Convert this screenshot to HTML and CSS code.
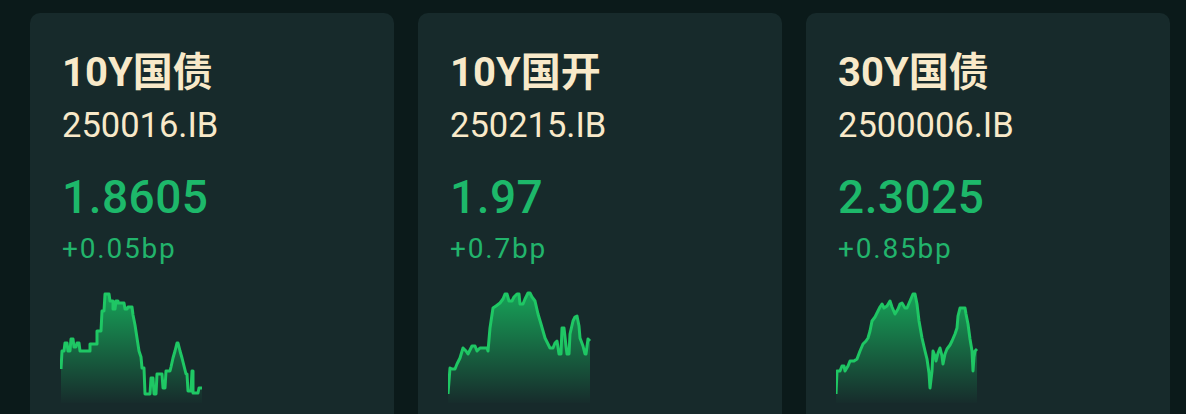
FILE: index.html
```html
<!DOCTYPE html>
<html lang="zh">
<head>
    <meta charset="UTF-8">
    <meta name="viewport" content="width=device-width, initial-scale=1.0">
    <title>债券行情</title>
    <link rel="stylesheet" href="styles.css">
</head>
<body>
    <div class="board">
        <div class="card">
            <div class="name">10Y国债</div>
            <div class="code">250016.IB</div>
            <div class="price">1.8605</div>
            <div class="change">+0.05bp</div>
            <svg class="spark" viewBox="60 288 146 114">
                <defs>
                    <linearGradient id="fill1" x1="0" y1="0" x2="0" y2="1">
                        <stop offset="0" stop-color="#17a85a" stop-opacity="0.95"/>
                        <stop offset="1" stop-color="#17a85a" stop-opacity="0"/>
                    </linearGradient>
                </defs>
                <path class="area" fill="url(#fill1)" d="M61 368 L62 350 L64 350 L65 342 L67 342 L68 350 L70 350 L71 338 L73 338 L74 346 L76 346 L77 342 L79 342 L80 350 L88 350 L90 350 L90 343 L97 343 L97 330 L101 330 L102 310 L104 310 L105 293 L109 293 L110 300 L113 300 L113 308 L115 308 L116 300 L118 300 L118 302 L124 302 L125 308 L127 308 L128 306 L132 306 L133 314 L135 324 L137 337 L139 350 L141 356 L142 367 L144 367 L145 393 L150 393 L151 377 L153 377 L154 393 L156 393 L157 373 L162 373 L163 387 L165 387 L166 370 L170 370 L171 366 L173 357 L175 350 L177 342 L178 342 L180 350 L182 357 L184 365 L186 373 L187 373 L188 390 L191 390 L192 370 L193 370 L193 392 L198 392 L199 387 L202 387 L202 404 L61 404 Z"/>
                <path class="line" d="M61 368 L62 350 L64 350 L65 342 L67 342 L68 350 L70 350 L71 338 L73 338 L74 346 L76 346 L77 342 L79 342 L80 350 L88 350 L90 350 L90 343 L97 343 L97 330 L101 330 L102 310 L104 310 L105 293 L109 293 L110 300 L113 300 L113 308 L115 308 L116 300 L118 300 L118 302 L124 302 L125 308 L127 308 L128 306 L132 306 L133 314 L135 324 L137 337 L139 350 L141 356 L142 367 L144 367 L145 393 L150 393 L151 377 L153 377 L154 393 L156 393 L157 373 L162 373 L163 387 L165 387 L166 370 L170 370 L171 366 L173 357 L175 350 L177 342 L178 342 L180 350 L182 357 L184 365 L186 373 L187 373 L188 390 L191 390 L192 370 L193 370 L193 392 L198 392 L199 387 L202 387"/>
            </svg>
        </div>
        <div class="card">
            <div class="name">10Y国开</div>
            <div class="code">250215.IB</div>
            <div class="price">1.97</div>
            <div class="change">+0.7bp</div>
            <svg class="spark" viewBox="448 288 146 114">
                <defs>
                    <linearGradient id="fill2" x1="0" y1="0" x2="0" y2="1">
                        <stop offset="0" stop-color="#17a85a" stop-opacity="0.95"/>
                        <stop offset="1" stop-color="#17a85a" stop-opacity="0"/>
                    </linearGradient>
                </defs>
                <path class="area" fill="url(#fill2)" d="M448 393 L450 367 L452 368 L455 368 L457 363 L460 357 L463 347 L466 350 L468 353 L472 345 L475 345 L477 350 L480 347 L487 347 L488 350 L490 327 L493 307 L496 305 L500 302 L503 298 L505 293 L507 293 L509 300 L512 300 L514 296 L517 293 L519 293 L520 303 L523 303 L525 298 L528 292 L530 292 L532 296 L535 300 L538 313 L541 323 L543 330 L545 337 L548 343 L550 347 L553 347 L555 342 L557 340 L559 353 L561 353 L562 327 L564 327 L566 345 L567 353 L569 353 L570 333 L573 320 L575 316 L577 315 L579 325 L580 337 L583 345 L585 353 L586 353 L588 338 L590 340 L590 404 L448 404 Z"/>
                <path class="line" d="M448 393 L450 367 L452 368 L455 368 L457 363 L460 357 L463 347 L466 350 L468 353 L472 345 L475 345 L477 350 L480 347 L487 347 L488 350 L490 327 L493 307 L496 305 L500 302 L503 298 L505 293 L507 293 L509 300 L512 300 L514 296 L517 293 L519 293 L520 303 L523 303 L525 298 L528 292 L530 292 L532 296 L535 300 L538 313 L541 323 L543 330 L545 337 L548 343 L550 347 L553 347 L555 342 L557 340 L559 353 L561 353 L562 327 L564 327 L566 345 L567 353 L569 353 L570 333 L573 320 L575 316 L577 315 L579 325 L580 337 L583 345 L585 353 L586 353 L588 338 L590 340"/>
            </svg>
        </div>
        <div class="card">
            <div class="name">30Y国债</div>
            <div class="code">2500006.IB</div>
            <div class="price">2.3025</div>
            <div class="change">+0.85bp</div>
            <svg class="spark" viewBox="836 288 146 114">
                <defs>
                    <linearGradient id="fill3" x1="0" y1="0" x2="0" y2="1">
                        <stop offset="0" stop-color="#17a85a" stop-opacity="0.95"/>
                        <stop offset="1" stop-color="#17a85a" stop-opacity="0"/>
                    </linearGradient>
                </defs>
                <path class="area" fill="url(#fill3)" d="M836 393 L837 370 L840 370 L842 365 L844 365 L845 370 L848 365 L850 360 L854 360 L857 358 L860 350 L863 343 L866 340 L868 337 L870 330 L872 320 L875 316 L878 310 L880 306 L882 303 L884 307 L887 305 L890 300 L892 306 L895 313 L898 308 L900 303 L902 302 L905 307 L907 307 L910 300 L913 293 L915 293 L917 303 L919 320 L922 337 L925 350 L927 358 L929 372 L930 387 L932 370 L933 350 L935 355 L936 360 L938 352 L940 347 L942 355 L943 363 L945 353 L947 348 L950 344 L952 340 L955 333 L957 327 L958 315 L960 307 L965 307 L966 313 L968 323 L970 338 L972 350 L973 370 L974 356 L975 350 L977 348 L977 404 L836 404 Z"/>
                <path class="line" d="M836 393 L837 370 L840 370 L842 365 L844 365 L845 370 L848 365 L850 360 L854 360 L857 358 L860 350 L863 343 L866 340 L868 337 L870 330 L872 320 L875 316 L878 310 L880 306 L882 303 L884 307 L887 305 L890 300 L892 306 L895 313 L898 308 L900 303 L902 302 L905 307 L907 307 L910 300 L913 293 L915 293 L917 303 L919 320 L922 337 L925 350 L927 358 L929 372 L930 387 L932 370 L933 350 L935 355 L936 360 L938 352 L940 347 L942 355 L943 363 L945 353 L947 348 L950 344 L952 340 L955 333 L957 327 L958 315 L960 307 L965 307 L966 313 L968 323 L970 338 L972 350 L973 370 L974 356 L975 350 L977 348"/>
            </svg>
        </div>
    </div>
</body>
</html>
```
FILE: styles.css
```css
body {
    margin: 0;
    background-color: #0b1a1a;
    font-family: Roboto, "Noto Sans CJK SC", sans-serif;
    overflow: hidden;
}
.board {
    display: flex;
    gap: 24px;
    padding: 13px 16px 0 30px;
}
.card {
    width: 364px;
    height: 430px;
    box-sizing: border-box;
    padding: 38px 32px 0 32px;
    background-color: #172a2b;
    border-radius: 10px;
}
.name {
    font-size: 40px;
    line-height: 44px;
    font-weight: 700;
    color: #f8e9c9;
}
.code {
    margin-top: 10px;
    font-size: 34.5px;
    line-height: 40px;
    color: #f8e9c9;
}
.price {
    margin-top: 26px;
    font-size: 46px;
    line-height: 52px;
    font-weight: 500;
    color: #1db86a;
    letter-spacing: 0.5px;
}
.change {
    margin-top: 10px;
    font-size: 28px;
    line-height: 32px;
    color: #22b46c;
    letter-spacing: 1.8px;
}
.spark {
    display: block;
    margin-top: 24px;
    margin-left: -2px;
    width: 146px;
    height: 114px;
}
.spark .area {
    stroke: none;
}
.spark .line {
    fill: none;
    stroke: #1fc764;
    stroke-width: 3;
    stroke-linejoin: round;
}
```
